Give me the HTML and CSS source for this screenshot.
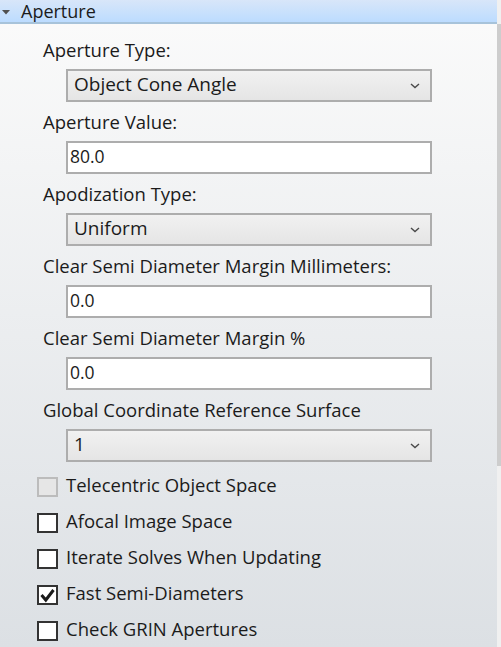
FILE: index.html
```html
<!DOCTYPE html>
<html>
<head>
<meta charset="utf-8">
<link rel="stylesheet" href="styles.css">
</head>
<body>
<div class="window">
  <div class="main">
    <div class="header">
      <svg class="expander" width="10" height="8" viewBox="0 0 10 8"><polygon points="1,1 9,1 5,5.5" fill="#505050"/></svg>
      <span class="header-title">Aperture</span>
    </div>
    <div class="content">
      <div class="field">
        <div class="label">Aperture Type:</div>
        <div class="control select"><span>Object Cone Angle</span><svg class="chev" width="10" height="6" viewBox="0 0 10 6"><polyline points="1,1 5,4.5 9,1" fill="none" stroke="#4a4a4a" stroke-width="1.4"/></svg></div>
      </div>
      <div class="field">
        <div class="label">Aperture Value:</div>
        <div class="control input">80.0</div>
      </div>
      <div class="field">
        <div class="label">Apodization Type:</div>
        <div class="control select"><span>Uniform</span><svg class="chev" width="10" height="6" viewBox="0 0 10 6"><polyline points="1,1 5,4.5 9,1" fill="none" stroke="#4a4a4a" stroke-width="1.4"/></svg></div>
      </div>
      <div class="field">
        <div class="label">Clear Semi Diameter Margin Millimeters:</div>
        <div class="control input">0.0</div>
      </div>
      <div class="field">
        <div class="label">Clear Semi Diameter Margin %</div>
        <div class="control input">0.0</div>
      </div>
      <div class="field">
        <div class="label">Global Coordinate Reference Surface</div>
        <div class="control select"><span>1</span><svg class="chev" width="10" height="6" viewBox="0 0 10 6"><polyline points="1,1 5,4.5 9,1" fill="none" stroke="#4a4a4a" stroke-width="1.4"/></svg></div>
      </div>
      <div class="checks">
        <div class="check-row"><span class="box disabled"></span><span class="check-text">Telecentric Object Space</span></div>
        <div class="check-row"><span class="box"></span><span class="check-text">Afocal Image Space</span></div>
        <div class="check-row"><span class="box"></span><span class="check-text">Iterate Solves When Updating</span></div>
        <div class="check-row"><span class="box"><svg width="17" height="16" viewBox="0 0 17 16"><polyline points="2.5,8 6.8,13 14.5,3" fill="none" stroke="#1a1a1a" stroke-width="3" stroke-linejoin="miter"/></svg></span><span class="check-text">Fast Semi-Diameters</span></div>
        <div class="check-row"><span class="box"></span><span class="check-text">Check GRIN Apertures</span></div>
      </div>
    </div>
  </div>
  <div class="scrollbar">
    <div class="sb-top"></div>
    <div class="sb-thumb"></div>
    <div class="sb-track"></div>
  </div>
</div>
</body>
</html>
```

FILE: styles.css
```css
html, body {
  margin: 0;
  padding: 0;
  height: 100%;
  overflow: hidden;
}
body {
  font-family: "Open Sans", "Noto Sans", sans-serif;
  font-size: 18.5px;
  color: #1b1b1b;
}
.window {
  display: flex;
  height: 647px;
  width: 501px;
}
.main {
  flex: 1;
  display: flex;
  flex-direction: column;
  background: linear-gradient(#fbfbfb, #dce0e4);
}
.header {
  height: 22px;
  border-bottom: 2px solid #a7c3da;
  background: linear-gradient(#d8e6f9, #bcdcff);
  display: flex;
  align-items: center;
  font-size: 18px;
}
.expander {
  margin-left: 1px;
  margin-top: 3px;
}
.header-title {
  margin-left: 10px;
  line-height: 22px;
}
.content {
  padding: 14px 0 0 37px;
}
.field {
  padding-left: 6px;
}
.label {
  height: 24px;
  line-height: 24px;
  white-space: nowrap;
}
.control {
  box-sizing: border-box;
  margin: 7px 0 8px 23px;
  width: 366px;
  height: 33px;
  border: 2px solid #adadad;
  display: flex;
  align-items: center;
  padding-bottom: 3px;
}
.select {
  background: linear-gradient(#f1f1f1, #e5e5e5);
  padding-left: 6px;
  padding-right: 10px;
  justify-content: space-between;
  font-size: 19px;
}
.input {
  background: #ffffff;
  padding-left: 2px;
  font-size: 17.5px;
}
.chev {
  display: block;
  margin-top: 4px;
}
.checks {
  display: flex;
  flex-direction: column;
  margin-top: -1px;
}
.check-row {
  height: 36px;
  display: flex;
  align-items: center;
  gap: 8px;
}
.check-text {
  line-height: 24px;
  padding-bottom: 4px;
}
.box {
  box-sizing: border-box;
  width: 21px;
  height: 20px;
  border: 2px solid #333333;
  background: #ffffff;
  display: flex;
  align-items: center;
  justify-content: center;
}
.box.disabled {
  border-color: #bcbcbc;
  background: #e6e6e6;
}
.scrollbar {
  width: 4px;
  display: flex;
  flex-direction: column;
  background: #f0f0f0;
}
.sb-top {
  height: 24px;
}
.sb-thumb {
  height: 442px;
  background: #cdcdcd;
}
.sb-track {
  flex: 1;
}
```
